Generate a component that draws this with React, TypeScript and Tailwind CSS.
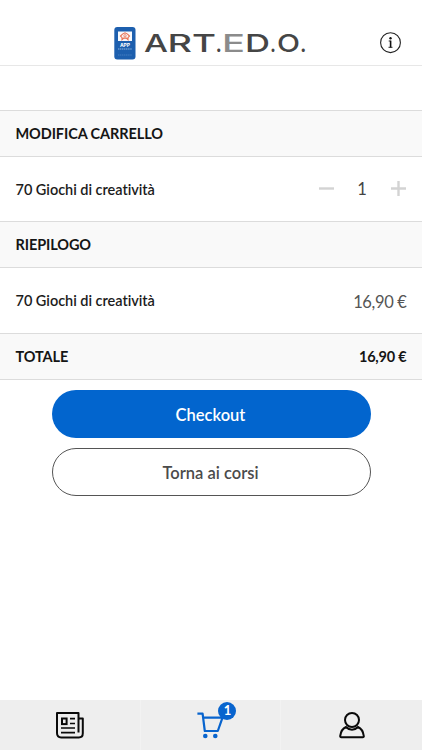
import type { ReactNode } from "react";

const wordmark = [
  { glyph: "A", x: 0, width: 24, fill: "#454545" },
  { glyph: "R", x: 23.5, width: 24.5, fill: "#454545" },
  { glyph: "T", x: 48, width: 24, fill: "#454545" },
  { glyph: ".", x: 71.5, width: 6.5, fill: "#454545" },
  { glyph: "E", x: 78, width: 23, fill: "#8b8b8b" },
  { glyph: "D", x: 101, width: 25, fill: "#454545" },
  { glyph: ".", x: 126, width: 6, fill: "#454545" },
  { glyph: "O", x: 133, width: 23, fill: "#454545" },
  { glyph: ".", x: 156, width: 6.5, fill: "#454545" },
];

function Brand() {
  return (
    <div className="flex items-center">
      <svg width="22" height="34" viewBox="0 0 22 34" aria-hidden="true">
        <rect x="0.3" y="1" width="21.2" height="32.5" rx="3" fill="#1d5fae" />
        <rect x="4" y="5.500" width="14" height="9.5" fill="#f7f9fc" />
        <path d="M8 13.700v-2.2L6.5 10.100l2-2 2.5-1.3 2.5 1.3 2 2-1.5 1.4v2.2l-1.700-1.600h-2.600z" fill="none" stroke="#e86f50" strokeWidth="1.1" />
        <circle cx="11" cy="9.8" r="1.2" fill="none" stroke="#e86f50" strokeWidth="0.8" />
        <text x="11" y="20.500" textAnchor="middle" fill="#fff" fontFamily="Inter, sans-serif" fontWeight="700" fontSize="5">APP</text>
        <path d="M4 23h14" stroke="#8db4df" strokeWidth="1" strokeDasharray="1.4 .5" />
        <path d="M4 29h14" stroke="#4f86c6" strokeWidth="0.8" strokeDasharray="1.4 .5" />
      </svg>
      <svg className="ml-2" width="166" height="30" viewBox="0 0 166 30" role="img" aria-label="ART.ED.O.">
        {wordmark.map(({ glyph, x, width, fill }) => (
          <text
            key={x}
            x={x}
            y="24"
            textLength={width}
            lengthAdjust="spacingAndGlyphs"
            fill={fill}
            fontFamily="Inter, sans-serif"
            fontWeight="500"
            fontSize="24.7"
          >
            {glyph}
          </text>
        ))}
      </svg>
    </div>
  );
}

function InfoIcon() {
  return (
    <svg width="22" height="22" viewBox="0 0 22 22" fill="none" aria-hidden="true">
      <circle cx="10.500" cy="10.700" r="9.9" stroke="#222" strokeWidth="1.1" />
      <circle cx="10.500" cy="6.3" r="1.2" fill="#111" />
      <path d="M8.700 9h1.800M8.500 15.300h4" stroke="#111" strokeWidth="0.9" />
      <path d="M10.600 8.600v6.900" stroke="#111" strokeWidth="1.6" />
    </svg>
  );
}

function NewsIcon() {
  return (
    <svg width="28" height="27" viewBox="0 0 28 27" fill="none" stroke="#0a0a0a" strokeWidth="2" aria-hidden="true">
      <path d="M22.500 20.500V1H1v20c0 2.800 1.400 4.400 4.200 4.400h17.600c2.500 0 4-1.600 4-4.200V6.600h-4.300" strokeLinejoin="round" />
      <rect x="6" y="6.500" width="4.600" height="5.600" />
      <path d="M14 6.700h5M14 11.500h5M5 16h14M5 20.700h14" strokeWidth="1.700" />
    </svg>
  );
}

function CartIcon() {
  return (
    <svg width="28" height="27" viewBox="0 0 28 27" fill="none" stroke="#0864ce" strokeWidth="2.200" aria-hidden="true">
      <path d="M.4 1.600h5.200L7.800 19h13l4.700-13.300H6.200" strokeLinejoin="round" />
      <circle cx="8.300" cy="24" r="2.300" fill="#0864ce" stroke="none" />
      <circle cx="18.300" cy="24" r="2.300" fill="#0864ce" stroke="none" />
    </svg>
  );
}

function UserIcon() {
  return (
    <svg width="26" height="27" viewBox="0 0 26 27" fill="none" stroke="#0a0a0a" strokeWidth="2" aria-hidden="true">
      <circle cx="13" cy="8" r="7" />
      <path d="M7 15c-3.200 1.300-5.200 4.800-5.800 9-.1.800.3 1.300 1.100 1.300h21.400c.8 0 1.200-.5 1.100-1.300-.6-4.200-2.600-7.700-5.800-9-1.700 1.800-3.700 2.700-6 2.700S8.700 16.800 7 15z" strokeLinejoin="round" />
    </svg>
  );
}

function SectionBand({ title, value }: { title: string; value?: string }) {
  return (
    <div className="flex h-[47px] items-center justify-between border-y border-[#dcdcdc] bg-[#f9f9f9] px-[15.500px] text-[14.500px] font-bold tracking-[-0.1px] text-[#151515]">
      <span>{title}</span>
      {value && <span className="tracking-[-0.2px]">{value}</span>}
    </div>
  );
}

function CartRow({ height, children }: { height: string; children: ReactNode }) {
  return (
    <div className={`flex items-center justify-between px-[15.500px] ${height}`}>
      <span className="text-[14.500px] leading-[22px] font-semibold tracking-[-0.03px] text-[#1c1c1c]">70 Giochi di creatività</span>
      {children}
    </div>
  );
}

export default function App() {
  return (
    <main className="flex h-[750px] w-[422px] flex-col overflow-hidden bg-white font-['Lato',sans-serif] [font-variant-ligatures:none]">
      <header className="flex h-[66px] items-end border-b border-[#e7e7e7]">
        <div className="flex h-[44px] w-full items-center justify-between pr-5 pl-[114px]">
          <Brand />
          <button aria-label="Info"><InfoIcon /></button>
        </div>
      </header>
      <section className="pt-11">
        <SectionBand title="MODIFICA CARRELLO" />
        <CartRow height="h-[64px] pt-px">
          <div className="flex items-center pb-px text-[#d3d3d3]">
            <button aria-label="Rimuovi">
              <svg width="16" height="16" viewBox="0 0 16 16" stroke="currentColor" strokeWidth="2.400"><path d="M0 7.500h15" /></svg>
            </button>
            <span className="w-14 pr-px text-center text-[16.500px] leading-5 text-[#444]">1</span>
            <button aria-label="Aggiungi">
              <svg width="16" height="16" viewBox="0 0 16 16" stroke="currentColor" strokeWidth="2.400"><path d="M0 7.500h15M7.500 0v15" /></svg>
            </button>
          </div>
        </CartRow>
        <SectionBand title="RIEPILOGO" />
        <CartRow height="h-[65px]">
          <span className="pt-0.5 text-[16.500px] leading-6 tracking-[-0.35px] text-[#555]">16,90 €</span>
        </CartRow>
        <SectionBand title="TOTALE" value="16,90 €" />
      </section>
      <div className="mt-[10px] flex flex-col items-center gap-[10px] text-[16.500px] font-semibold">
        <button className="h-12 w-[319px] rounded-full bg-[#0265ce] pt-0.5 pr-px text-white">Checkout</button>
        <button className="h-12 w-[319px] rounded-full border border-[#555] pt-0.5 pr-px text-[#4b4b4b]">Torna ai corsi</button>
      </div>
      <nav className="mt-auto grid h-[50px] grid-cols-3 divide-x divide-[#f2f2f2] bg-[#eeeeee]">
        <button className="flex items-center justify-center"><NewsIcon /></button>
        <button className="flex items-center justify-center pl-0.5">
          <span className="relative">
            <CartIcon />
            <span className="absolute -top-[10px] left-[21px] flex h-[18px] w-[18px] items-center justify-center rounded-full bg-[#0864ce] text-[13px] leading-none font-bold text-white">1</span>
          </span>
        </button>
        <button className="flex items-center justify-center"><UserIcon /></button>
      </nav>
    </main>
  );
}
